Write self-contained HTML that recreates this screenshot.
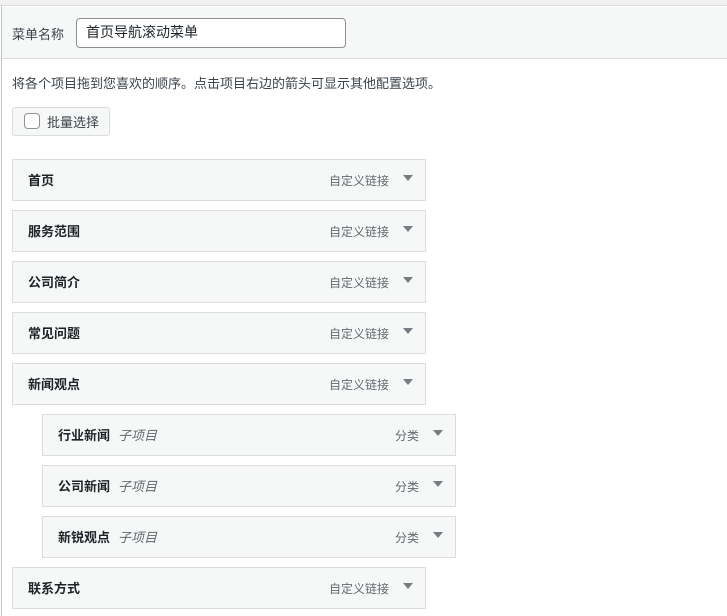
<!DOCTYPE html><html><head><meta charset="utf-8"><style>
*{box-sizing:border-box;margin:0;padding:0}
body{width:727px;height:616px;background:#fff;font-family:"Liberation Sans","Noto Sans CJK SC",sans-serif;font-size:13px;color:#1d2327;position:relative;overflow:hidden}
.top{position:absolute;left:0;top:0;width:727px;height:6px;background:#f0f0f1;border-bottom:1px solid #dcdcde}
.lb{position:absolute;left:1px;top:6px;width:1px;height:610px;background:#c3c4c7}
.hdr{position:absolute;left:2px;top:7px;width:725px;height:52px;background:#f6f7f7;border-bottom:1px solid #dcdcde}
.lbl{position:absolute;left:12px;top:24px;color:#3c434a}
.inp{position:absolute;left:76px;top:18px;width:270px;height:30px;border:1px solid #8c8f94;border-radius:4px;background:#fff;padding-left:9px;line-height:27px;font-size:14px}
.txt{position:absolute;left:12px;top:73px;color:#3c434a}
.btn{position:absolute;left:12px;top:107px;width:98px;height:29px;border:1px solid #dcdcde;border-radius:3px;background:#f6f7f7;color:#3c434a}
.cb{position:absolute;left:11px;top:5px;width:16px;height:16px;border:1px solid #8c8f94;border-radius:4px;background:#fff}
.btn span{position:absolute;left:34px;top:4px}
.it{position:absolute;width:414px;height:42px;background:#f6f7f7;border:1px solid #dcdcde}
.it b{position:absolute;left:15px;top:10px;font-size:13px}
.it i{font-style:italic;font-weight:normal;color:#646970;margin-left:8px}
.it .ty{position:absolute;right:36px;top:12px;color:#646970;font-size:12px}
.it .ar{position:absolute;right:12px;top:15px;width:0;height:0;border-left:5px solid transparent;border-right:5px solid transparent;border-top:6px solid #787c82}
</style></head><body>
<div class="top"></div><div class="hdr"></div><div class="lb"></div>
<div class="lbl">菜单名称</div>
<div class="inp">首页导航滚动菜单</div>
<div class="txt">将各个项目拖到您喜欢的顺序。点击项目右边的箭头可显示其他配置选项。</div>
<div class="btn"><div class="cb"></div><span>批量选择</span></div>
<div class="it" style="left:12px;top:159px"><b>首页</b><span class="ty">自定义链接</span><span class="ar"></span></div>
<div class="it" style="left:12px;top:210px"><b>服务范围</b><span class="ty">自定义链接</span><span class="ar"></span></div>
<div class="it" style="left:12px;top:261px"><b>公司简介</b><span class="ty">自定义链接</span><span class="ar"></span></div>
<div class="it" style="left:12px;top:312px"><b>常见问题</b><span class="ty">自定义链接</span><span class="ar"></span></div>
<div class="it" style="left:12px;top:363px"><b>新闻观点</b><span class="ty">自定义链接</span><span class="ar"></span></div>
<div class="it" style="left:42px;top:414px"><b>行业新闻<i>子项目</i></b><span class="ty">分类</span><span class="ar"></span></div>
<div class="it" style="left:42px;top:465px"><b>公司新闻<i>子项目</i></b><span class="ty">分类</span><span class="ar"></span></div>
<div class="it" style="left:42px;top:516px"><b>新锐观点<i>子项目</i></b><span class="ty">分类</span><span class="ar"></span></div>
<div class="it" style="left:12px;top:567px"><b>联系方式</b><span class="ty">自定义链接</span><span class="ar"></span></div>
</body></html>
